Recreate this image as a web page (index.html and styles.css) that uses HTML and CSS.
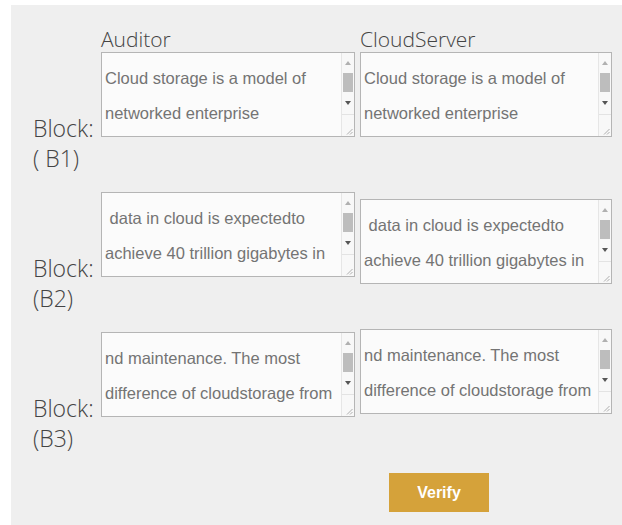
FILE: index.html
```html
<!DOCTYPE html>
<html lang="en">
<head>
<meta charset="utf-8">
<title>Block verification</title>
<link rel="stylesheet" href="styles.css">
</head>
<body>
<div class="panel">
  <div class="heads">
    <span class="head head-auditor">Auditor</span>
    <span class="head head-server">CloudServer</span>
  </div>

  <div class="block">
    <span class="block-label">Block:<br>( B1)</span>
    <div class="field">
      <div class="field-text">
        <span class="line">Cloud storage is a model of</span>
        <span class="line">networked enterprise</span>
      </div>
      <div class="scrollbar">
        <span class="sb-up"><i class="tri-up"></i></span>
        <span class="sb-thumb"></span>
        <span class="sb-down"><i class="tri-down"></i></span>
        <span class="sb-corner"><svg width="7" height="7" viewBox="0 0 7 7"><path d="M6.5 1 L1 6.5 M6.5 4 L4 6.5" stroke="#9a9a9a" stroke-width="0.8" fill="none"/></svg></span>
      </div>
    </div>
    <div class="field">
      <div class="field-text">
        <span class="line">Cloud storage is a model of</span>
        <span class="line">networked enterprise</span>
      </div>
      <div class="scrollbar">
        <span class="sb-up"><i class="tri-up"></i></span>
        <span class="sb-thumb"></span>
        <span class="sb-down"><i class="tri-down"></i></span>
        <span class="sb-corner"><svg width="7" height="7" viewBox="0 0 7 7"><path d="M6.5 1 L1 6.5 M6.5 4 L4 6.5" stroke="#9a9a9a" stroke-width="0.8" fill="none"/></svg></span>
      </div>
    </div>
  </div>

  <div class="block">
    <span class="block-label">Block:<br>(B2)</span>
    <div class="field">
      <div class="field-text">
        <span class="line"> data in cloud is expectedto</span>
        <span class="line">achieve 40 trillion gigabytes in</span>
      </div>
      <div class="scrollbar">
        <span class="sb-up"><i class="tri-up"></i></span>
        <span class="sb-thumb"></span>
        <span class="sb-down"><i class="tri-down"></i></span>
        <span class="sb-corner"><svg width="7" height="7" viewBox="0 0 7 7"><path d="M6.5 1 L1 6.5 M6.5 4 L4 6.5" stroke="#9a9a9a" stroke-width="0.8" fill="none"/></svg></span>
      </div>
    </div>
    <div class="field field-low">
      <div class="field-text">
        <span class="line"> data in cloud is expectedto</span>
        <span class="line">achieve 40 trillion gigabytes in</span>
      </div>
      <div class="scrollbar">
        <span class="sb-up"><i class="tri-up"></i></span>
        <span class="sb-thumb"></span>
        <span class="sb-down"><i class="tri-down"></i></span>
        <span class="sb-corner"><svg width="7" height="7" viewBox="0 0 7 7"><path d="M6.5 1 L1 6.5 M6.5 4 L4 6.5" stroke="#9a9a9a" stroke-width="0.8" fill="none"/></svg></span>
      </div>
    </div>
  </div>

  <div class="block">
    <span class="block-label">Block:<br>(B3)</span>
    <div class="field">
      <div class="field-text">
        <span class="line">nd maintenance. The most</span>
        <span class="line">difference of cloudstorage from</span>
      </div>
      <div class="scrollbar">
        <span class="sb-up"><i class="tri-up"></i></span>
        <span class="sb-thumb"></span>
        <span class="sb-down"><i class="tri-down"></i></span>
        <span class="sb-corner"><svg width="7" height="7" viewBox="0 0 7 7"><path d="M6.5 1 L1 6.5 M6.5 4 L4 6.5" stroke="#9a9a9a" stroke-width="0.8" fill="none"/></svg></span>
      </div>
    </div>
    <div class="field field-high">
      <div class="field-text">
        <span class="line">nd maintenance. The most</span>
        <span class="line">difference of cloudstorage from</span>
      </div>
      <div class="scrollbar">
        <span class="sb-up"><i class="tri-up"></i></span>
        <span class="sb-thumb"></span>
        <span class="sb-down"><i class="tri-down"></i></span>
        <span class="sb-corner"><svg width="7" height="7" viewBox="0 0 7 7"><path d="M6.5 1 L1 6.5 M6.5 4 L4 6.5" stroke="#9a9a9a" stroke-width="0.8" fill="none"/></svg></span>
      </div>
    </div>
  </div>

  <div class="actions">
    <button class="verify" type="button">Verify</button>
  </div>
</div>
</body>
</html>
```

FILE: styles.css
```css
body {
  margin: 0;
  background: #ffffff;
  font-family: "Liberation Sans", Arial, sans-serif;
}

.panel {
  margin: 5px 0 0 11px;
  height: 520px;
  box-sizing: border-box;
  padding: 21px 0 0 22px;
  background: #efefef;
}

/* column titles */
.heads {
  display: grid;
  grid-template-columns: 63px 254px 252px;
  column-gap: 5px;
  height: 26px;
  font-family: "Open Sans", "Liberation Sans", sans-serif;
  font-weight: 300;
  font-size: 21px;
  line-height: 26px;
  color: #444444;
}

.head-auditor { grid-column: 2; }
.head-server { grid-column: 3; }

/* one block row: label + two text fields */
.block {
  display: grid;
  grid-template-columns: 63px 254px 252px;
  grid-template-rows: 85px;
  column-gap: 5px;
  height: 140px;
}

.block-label {
  align-self: start;
  margin-top: 61px;
  font-family: "Open Sans", "Liberation Sans", sans-serif;
  font-weight: 300;
  font-size: 23px;
  line-height: 30px;
  color: #444444;
  white-space: nowrap;
}

.field {
  display: flex;
  height: 85px;
  box-sizing: border-box;
  border: 1px solid #b5b5b5;
  background: #fbfbfb;
}

.field-low { margin-top: 7px; }
.field-high { margin-top: -3px; }

.field-text {
  flex: 1;
  min-width: 0;
  overflow: hidden;
  padding: 8px 0 0 3px;
  font-size: 16.5px;
  line-height: 35px;
  color: #747474;
}

.line {
  display: block;
  white-space: pre;
}

/* vertical scrollbar with resize corner */
.scrollbar {
  display: flex;
  flex-direction: column;
  width: 12px;
  border-left: 1px solid #e6e6e6;
  background: #f8f8f8;
}

.sb-up,
.sb-down {
  display: flex;
  justify-content: center;
  align-items: center;
}

.sb-up { height: 20px; }
.sb-down { height: 22px; }

.tri-up {
  width: 0;
  height: 0;
  border-left: 3px solid transparent;
  border-right: 3px solid transparent;
  border-bottom: 4px solid #b0b0b0;
}

.tri-down {
  width: 0;
  height: 0;
  border-left: 3px solid transparent;
  border-right: 3px solid transparent;
  border-top: 4px solid #555555;
}

.sb-thumb {
  height: 19px;
  margin: 0 1px;
  background: #bdbdbd;
}

.sb-corner {
  flex: 1;
  display: flex;
  justify-content: flex-end;
  align-items: flex-end;
  border-top: 1px solid #e3e3e3;
  padding: 0 1px 1px 0;
}

.actions {
  padding: 1px 0 0 356px;
}

.verify {
  width: 100px;
  height: 39px;
  border: none;
  padding: 0;
  background: #d5a23a;
  color: #ffffff;
  font-family: inherit;
  font-size: 16px;
  font-weight: bold;
  cursor: pointer;
}
```
